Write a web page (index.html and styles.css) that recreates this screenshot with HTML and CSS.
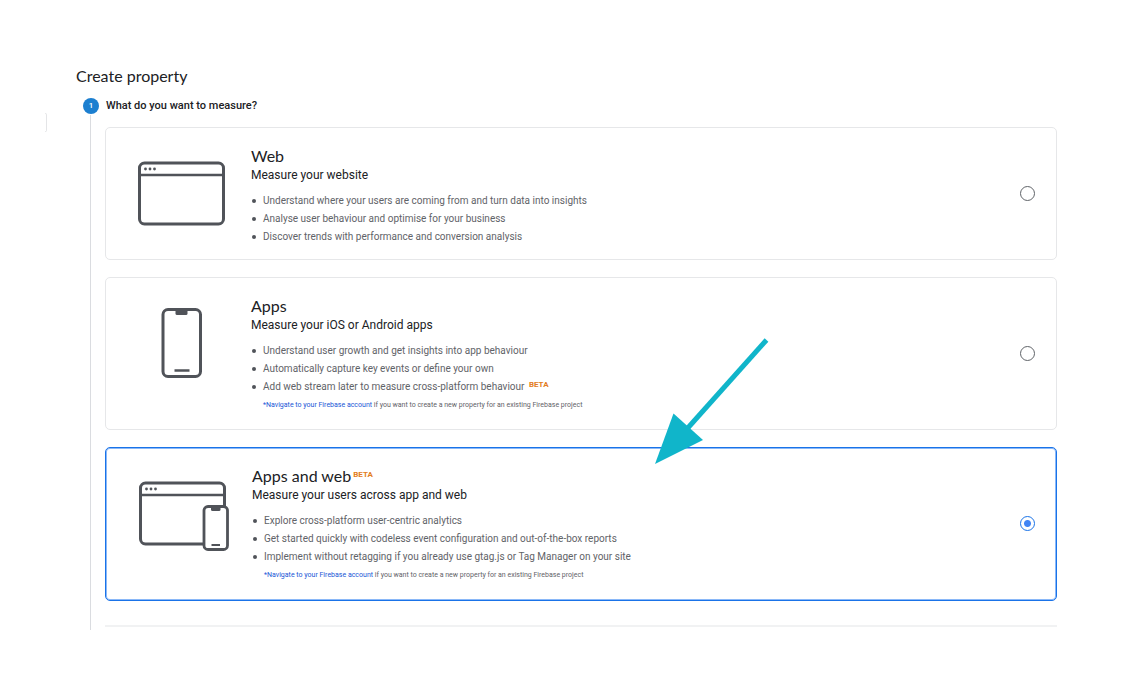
FILE: index.html
```html
<!DOCTYPE html>
<html lang="en">
<head>
    <meta charset="UTF-8">
    <meta name="viewport" content="width=device-width, initial-scale=1.0">
    <title>Create property</title>
    <link rel="stylesheet" href="styles.css">
</head>
<body>
    <div class="layout">
        <!-- Edge of the collapsed side panel -->
        <div class="panel-edge"></div>

        <main class="main">
            <h1>Create property</h1>

            <div class="step-header">
                <span class="step-number">1</span>
                <h2>What do you want to measure?</h2>
            </div>

            <div class="step-body">
                <div class="cards">
                    <!-- Web -->
                    <div class="card">
                        <svg class="card-icon" viewBox="0 0 92 72" fill="none" stroke="#505359" stroke-width="3">
                            <rect x="1.5" y="6" width="84" height="61" rx="5"/>
                            <path d="M2 18h84" stroke-width="2.5"/>
                            <g fill="#505359" stroke="none">
                                <circle cx="7.5" cy="12" r="1.4"/>
                                <circle cx="12" cy="12" r="1.4"/>
                                <circle cx="16.5" cy="12" r="1.4"/>
                            </g>
                        </svg>
                        <div class="card-content">
                            <h3><label for="type-web">Web</label></h3>
                            <p class="subtitle">Measure your website</p>
                            <ul>
                                <li>Understand where your users are coming from and turn data into insights</li>
                                <li>Analyse user behaviour and optimise for your business</li>
                                <li>Discover trends with performance and conversion analysis</li>
                            </ul>
                        </div>
                        <input type="radio" name="type" id="type-web">
                    </div>

                    <!-- Apps -->
                    <div class="card">
                        <svg class="card-icon" viewBox="0 0 92 72" fill="none" stroke="#505359" stroke-width="3">
                            <rect x="25" y="2.5" width="37.5" height="67" rx="5"/>
                            <path d="M37.5 3h12v3.5q0 1.5-1.5 1.5h-9q-1.5 0-1.5-1.5z" fill="#505359" stroke="none"/>
                            <path d="M36.5 63.500h15" stroke-width="2.5"/>
                        </svg>
                        <div class="card-content">
                            <h3><label for="type-apps">Apps</label></h3>
                            <p class="subtitle">Measure your iOS or Android apps</p>
                            <ul>
                                <li>Understand user growth and get insights into app behaviour</li>
                                <li>Automatically capture key events or define your own</li>
                                <li>Add web stream later to measure cross-platform behaviour <span class="beta">BETA</span></li>
                            </ul>
                            <p class="note"><a href="#">*Navigate to your Firebase account</a> if you want to create a new property for an existing Firebase project</p>
                        </div>
                        <input type="radio" name="type" id="type-apps">
                    </div>

                    <!-- Apps and web -->
                    <div class="card selected">
                        <svg class="card-icon" viewBox="0 0 92 72" fill="none" stroke="#505359" stroke-width="3">
                            <rect x="1.5" y="6" width="84" height="61" rx="5"/>
                            <path d="M2 18h84" stroke-width="2.5"/>
                            <g fill="#505359" stroke="none">
                                <circle cx="7.5" cy="12" r="1.4"/>
                                <circle cx="12" cy="12" r="1.4"/>
                                <circle cx="16.5" cy="12" r="1.4"/>
                            </g>
                            <rect x="65" y="29.5" width="23.5" height="43" rx="4" fill="#fff" stroke-width="2.8"/>
                            <path d="M72 29.500h9.5v3q0 1.500-1.500 1.500h-6.500q-1.500 0-1.500-1.500z" fill="#505359" stroke="none"/>
                            <path d="M72.500 68h8.500" stroke-width="2"/>
                        </svg>
                        <div class="card-content">
                            <h3><label for="type-both">Apps and web</label><span class="beta">BETA</span></h3>
                            <p class="subtitle">Measure your users across app and web</p>
                            <ul>
                                <li>Explore cross-platform user-centric analytics</li>
                                <li>Get started quickly with codeless event configuration and out-of-the-box reports</li>
                                <li>Implement without retagging if you already use gtag.js or Tag Manager on your site</li>
                            </ul>
                            <p class="note"><a href="#">*Navigate to your Firebase account</a> if you want to create a new property for an existing Firebase project</p>
                        </div>
                        <input type="radio" name="type" id="type-both" checked>

                        <!-- Arrow pointing at the option -->
                        <svg class="arrow" viewBox="0 0 114 128">
                            <path d="M111.500 3L31 93" stroke="#10b5ca" stroke-width="5"/>
                            <path d="M0 127L18.500 76.500 48 103z" fill="#10b5ca"/>
                        </svg>
                    </div>
                </div>
                <hr>
            </div>
        </main>
    </div>
</body>
</html>
```
FILE: styles.css
```css
* {
    box-sizing: border-box;
}

body {
    margin: 0;
    background-color: #fff;
    color: #202124;
    font-family: Roboto, Arial, sans-serif;
}

h1, h2, h3, p, ul {
    margin: 0;
    padding: 0;
    font-weight: 400;
}

.layout {
    display: flex;
    align-items: flex-start;
    gap: 29px;
    padding: 64px 75px 48px 45px;
}

.panel-edge {
    width: 2px;
    height: 19px;
    margin-top: 49px;
    border: 1px solid #e4e5e7;
    border-left: none;
    border-radius: 0 2px 2px 0;
}

.main {
    flex: 1;
}

h1 {
    font-family: Lato, sans-serif;
    font-size: 16px;
    line-height: 24px;
}

/* === Step === */
.step-header {
    display: flex;
    align-items: center;
    gap: 7px;
    margin-top: 9px;
    padding-left: 7px;
}

.step-number {
    width: 16px;
    height: 16px;
    border-radius: 50%;
    background-color: #1c7fd0;
    color: #fff;
    font-size: 8px;
    font-weight: 500;
    line-height: 16px;
    text-align: center;
}

h2 {
    font-size: 11px;
    font-weight: 500;
    line-height: 18px;
}

.step-body {
    margin-left: 14px;
    padding: 12px 0 3px 14px;
    border-left: 1px solid #dadce0;
}

hr {
    height: 2px;
    margin: 24px 0 0;
    border: none;
    background-color: #f1f2f3;
}

/* === Cards === */
.cards {
    display: flex;
    flex-direction: column;
    gap: 17px;
}

.card {
    position: relative;
    display: flex;
    align-items: flex-start;
    padding: 0 21px 0 32px;
    border: 1px solid #e6e7e9;
    border-radius: 5px;
}

.card.selected {
    padding: 0 21px 1px 33px;
    border-color: #1a73e8;
    box-shadow: inset 0 0 0 1px #8ab8f8;
}

.card-icon {
    flex: none;
    width: 92px;
    height: 72px;
    margin-top: 29px;
    overflow: visible;
}

.card-content {
    flex: 1;
    padding: 18px 21px 13px;
}

h3 {
    font-family: Lato, sans-serif;
    font-size: 16px;
    line-height: 20px;
}

.subtitle {
    font-size: 12px;
    line-height: 18px;
}

ul {
    margin-top: 8px;
    padding-left: 12px;
    color: #5f6368;
    font-size: 10px;
    line-height: 18px;
    list-style: none;
}

li::before {
    content: "";
    float: left;
    width: 4px;
    height: 4px;
    margin: 7px 0 0 -11px;
    border-radius: 50%;
    background-color: #505359;
}

.note {
    padding-left: 12px;
    color: #5f6368;
    font-size: 7px;
    line-height: 19px;
    padding-bottom: 1px;
}

.note a {
    color: #1a56d6;
    text-decoration: none;
}

.beta {
    margin-left: 2px;
    color: #e37d22;
    font-family: Roboto, Arial, sans-serif;
    font-size: 8px;
    font-weight: 700;
    line-height: 8px;
    vertical-align: 3px;
}

h3 .beta {
    vertical-align: 5px;
}

/* === Radio === */
input[type="radio"] {
    flex: none;
    align-self: center;
    width: 15px;
    height: 15px;
    margin: 0;
    appearance: none;
    border: 1px solid #5f6368;
    border-radius: 50%;
}

input[type="radio"]:checked {
    border-color: #1a73e8;
    background: radial-gradient(circle, #4285f4 3px, transparent 4px);
}

.arrow {
    position: absolute;
    top: -111px;
    left: 549px;
    width: 114px;
    height: 128px;
    pointer-events: none;
}
```
